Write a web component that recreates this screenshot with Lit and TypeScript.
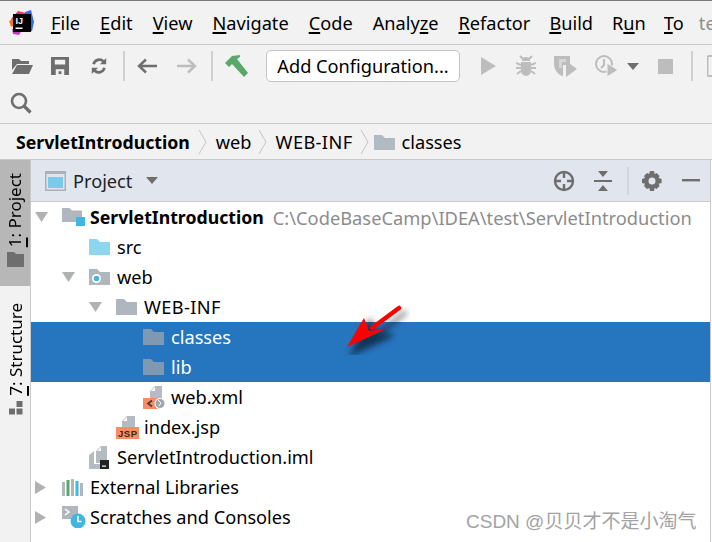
import { LitElement, html, css, svg } from "lit";
import { customElement } from "lit/decorators.js";

const G = "#afb1b3";
const D = "#6e6e6e";
const FOLDER = "M0 1h6l2 2.5h8V15H0z";

const ic = (w: number, h: number, body: unknown, vb = `0 0 ${w} ${h}`) =>
  html`<svg class="ic" width=${w} height=${h} viewBox=${vb}>${body}</svg>`;

const icons: Record<string, unknown> = {
  logo: ic(26, 26, svg`
    <path d="M2 9 9 1l8 2-3 16-9 1z" fill="#f0355e"/><path d="M0 11l6-3 2 6-6 3z" fill="#f97a12"/>
    <path d="M16 2l6-2 3 12-2 9-8-1z" fill="#2f6fe0"/><path d="M3 19l10 1-3 5-6-1z" fill="#c93cc0"/>
    <rect x="4" y="4" width="18" height="18" fill="#000"/>
    <text x="6.500" y="13.500" font-size="9" font-weight="700" fill="#fff" font-family="Liberation Sans">IJ</text>
    <rect x="6.500" y="17.500" width="7" height="1.500" fill="#fff"/>`),
  open: ic(22, 17, svg`<path d="M1 1h7l2 2h8v3H6L1 12z" fill="${D}"/><path d="M6 7h16l-4 9H1z" fill="${D}"/>`),
  save: ic(18, 18, svg`<path fill-rule="evenodd" d="M0 0h19v19H0zM4 3v5h11V3zM5 13v6h9v-6z" fill="${D}"/><rect x="8" y="15" width="3" height="3" fill="${D}"/>`, "0 0 19 19"),
  sync: ic(18, 18, svg`<path d="M4 8a6.500 6.500 0 0 1 11-3M16 12a6.500 6.500 0 0 1-11 3" fill="none" stroke="${D}" stroke-width="3"/><path d="M11 8l7-7v7zM9 12l-7 7v-7z" fill="${D}"/>`, "0 0 20 20"),
  back: ic(20, 16, svg`<path d="M20 8H3M9 1.500 2 8l7 6.500" fill="none" stroke="${D}" stroke-width="2.400"/>`),
  fwd: ic(20, 16, svg`<path d="M0 8h17M11 1.500 18 8l-7 6.500" fill="none" stroke="#bdbdbd" stroke-width="2.400"/>`),
  hammer: ic(24, 23, svg`<path d="M0 8 7 1l8-1v2l-3 2 11 14-4 4L7 9l-3 3z" fill="#59a869"/>`),
  search: ic(22, 22, svg`<circle cx="9" cy="9" r="7" fill="none" stroke="${D}" stroke-width="2.600"/><path d="M14 14l6.500 6.500" stroke="${D}" stroke-width="3.200"/>`),
  run: ic(16, 18, svg`<path d="M0 0l15 9-15 9z" fill="#bdbdbd"/>`),
  bug: ic(20, 22, svg`<path d="M6 6a4 4 0 0 1 8 0zM5 7h10v9a5 5 0 0 1-10 0z" fill="#bdbdbd"/><path d="M0 8l5 2M20 8l-5 2M0 13h5M20 13h-5M1 19l4-3M19 19l-4-3M4 1l3 3M16 1l-3 3" stroke="#bdbdbd" stroke-width="2"/>`),
  cover: ic(23, 24, svg`<path d="M0 2h16v9H9v11h-1C3 20 0 15 0 9z" fill="#bdbdbd"/><path d="M12 7l11 8-11 8z" fill="#bdbdbd"/><path d="M5 5h7v3H8v6H5z" fill="#f2f2f2" opacity=".5"/>`),
  prof: ic(23, 24, svg`<circle cx="9" cy="10" r="8" fill="none" stroke="#bdbdbd" stroke-width="2"/><path d="M9 5v6l-3 3" fill="none" stroke="#bdbdbd" stroke-width="2"/><path d="M12 9l11 7-11 7z" fill="#bdbdbd" stroke="#f2f2f2"/>`),
  caret: ic(12, 7, svg`<path d="M0 0h12L6 7z" fill="${D}"/>`),
  stop: ic(15, 15, svg`<rect width="15" height="15" fill="#bdbdbd"/>`),
  device: ic(10, 22, svg`<path d="M10 1H2a1.500 1.500 0 0 0-1.500 1.500v17A1.500 1.500 0 0 0 2 21h8" fill="none" stroke="#bdbdbd" stroke-width="2"/>`),
  crumbFolder: ic(21, 16, svg`<path d="M0 1h8l3 3h10v12H0z" fill="#afbac3"/>`),
  projectView: ic(21, 20, svg`<rect width="21" height="20" fill="#a9b0b8"/><rect x="1.500" y="3" width="18" height="15.500" fill="#e1e5ee"/><rect x="3" y="6" width="15" height="11" fill="#79cbe9"/>`),
  target: ic(22, 22, svg`<circle cx="11" cy="11" r="9" fill="none" stroke="${D}" stroke-width="2.400"/><path d="M11 1v7M11 14v7M1 11h7M14 11h7" stroke="${D}" stroke-width="2.400"/>`),
  collapse: ic(18, 22, svg`<path d="M4 1h10l-5 6zM4 21h10l-5-6z" fill="${D}"/><path d="M0 11h18" stroke="${D}" stroke-width="2"/>`),
  gear: ic(20, 20, svg`<path fill-rule="evenodd" d="M8 0h4l.6 3 2-.9 3 3-1 2 3 .9v4l-3 .7 1 2.300-3 3-2-1-.6 3H8l-.6-3-2.400 1-3-3 1-2.300-3-.7V8l3-.9-1-2 3-3 2 .9zM10 6.500a3.500 3.500 0 1 0 0 7 3.500 3.500 0 0 0 0-7z" fill="${D}"/>`),
  minus: ic(18, 3, svg`<rect width="18" height="2.400" fill="${D}"/>`),
  tabFolder: ic(17, 15, svg`<path d="M0 0h7l2 2h8v13H0z" fill="${D}"/>`),
  structure: ic(14, 14, svg`<rect x="7.500" y="0" width="6" height="6" fill="${D}"/><rect x="0" y="7.500" width="6" height="6" fill="${D}"/><rect x="7.500" y="7.500" width="6" height="6" fill="${D}"/>`),
  module: ic(23, 22, svg`<path d="${FOLDER}" transform="translate(0 1) scale(1.250 1)" fill="#afb6bd"/><rect x="14" y="11" width="9" height="9" fill="#40b6e0"/>`),
  src: ic(21, 16, svg`<path d="M0 0h8l3 3h10v13H0z" fill="#8ed5ee"/>`),
  web: ic(21, 16, svg`<path d="M0 0h8l3 3h10v13H0z" fill="#afb6bd"/><circle cx="7.500" cy="9.500" r="4.500" fill="#fff"/><circle cx="7.500" cy="9.500" r="2.800" fill="#40b6e0"/>`),
  folder: ic(21, 16, svg`<path d="M0 0h8l3 3h10v13H0z" fill="#afb6bd"/>`),
  folderSel: ic(21, 16, svg`<path d="M0 0h8l3 3h10v13H0z" fill="#8099b3"/>`),
  xml: ic(23, 23, svg`<path d="M7 5l5-5h7v14H7z" fill="#b4bbc2"/><path d="M8 5h4V1z" fill="#fff"/>
    <rect y="12" width="14" height="11" fill="#f98b65"/><path d="M9 14.500 5 17.500l4 3" fill="none" stroke="#3a3a3a" stroke-width="1.600"/>
    <circle cx="17" cy="17.500" r="5.500" fill="#fff"/><circle cx="17" cy="17.500" r="4.500" fill="#9aa7b0"/><path d="M15 14l3 3-2 3" stroke="#fff" fill="none"/>`),
  jsp: ic(23, 23, svg`<path d="M6 5l5-5h8v12H6z" fill="#b4bbc2"/><path d="M7 5h4V1z" fill="#fff"/><rect y="11" width="23" height="12" fill="#f98b65"/>
    <text x="2" y="21" font-size="9.500" font-weight="700" fill="#3a2a20" font-family="Liberation Sans" textLength="19">JSP</text>`),
  iml: ic(20, 23, svg`<path d="M7 5l5-5h6v17H7z" fill="#b4bbc2"/><path d="M8 5h4V1z" fill="#f7f7f7"/><path d="M0 9l5-4v18H0z" fill="#b4bbc2"/><rect x="5" y="6" width="1.500" height="17" fill="#fff"/>
    <path d="M5 18h6v5H5z" fill="#b4bbc2"/><rect x="11" y="14" width="9" height="9" fill="#232323"/><rect x="13" y="19.500" width="4" height="1.200" fill="#fff"/>`),
  libs: ic(22, 17, svg`<rect y="3" width="3" height="14" fill="#afb6bd"/><rect x="4.500" y="1" width="3" height="16" fill="#59a869"/><rect x="9" y="0" width="3" height="17" fill="#afb6bd"/><rect x="13.500" y="2" width="3" height="15" fill="#40b6e0"/><rect x="18" y="4" width="3" height="13" fill="#afb6bd"/>`),
  scratch: ic(24, 22, svg`<rect width="16" height="13" fill="#afb6bd"/><path d="M3 3l4 3-4 3" fill="none" stroke="#fff" stroke-width="1.500"/>
    <circle cx="16" cy="15" r="7.500" fill="#40b6e0"/><path d="M16 10v5.500h3.500" fill="none" stroke="#fff" stroke-width="1.500"/>`),
  down: ic(13, 10, svg`<path d="M0 0h13L6.500 10z" fill="${G}"/>`),
  right: ic(11, 13, svg`<path d="M0 0l11 6.500L0 13z" fill="${G}"/>`),
};

const sep = (cls: string) => html`<svg class=${cls} width="9" height="26" viewBox="0 0 9 26"><path d="M1 1l7 12-7 12" fill="none" stroke="#c4c4c4" stroke-width="1"/></svg>`;

const MENU: [string, string, string, string][] = [
  ["", "F", "ile", ""], ["", "E", "dit", ""], ["", "V", "iew", ""], ["", "N", "avigate", ""], ["", "C", "ode", ""],
  ["Analy", "z", "e", ""], ["", "R", "efactor", "tight"], ["", "B", "uild", "tight"], ["R", "u", "n", "tighter"], ["", "T", "o", "clip"],
];

interface Row { depth: number; arrow?: "down" | "right"; icon: string; text: string; bold?: boolean; hint?: string; sel?: boolean; caps?: boolean; }
const ROWS: Row[] = [
  { depth: 0, arrow: "down", icon: "module", text: "ServletIntroduction", bold: true, hint: "C:\\CodeBaseCamp\\IDEA\\test\\ServletIntroduction" },
  { depth: 1, icon: "src", text: "src" },
  { depth: 1, arrow: "down", icon: "web", text: "web" },
  { depth: 2, arrow: "down", icon: "folder", text: "WEB-INF", caps: true },
  { depth: 3, icon: "folderSel", text: "classes", sel: true },
  { depth: 3, icon: "folderSel", text: "lib", sel: true },
  { depth: 3, icon: "xml", text: "web.xml" },
  { depth: 2, icon: "jsp", text: "index.jsp" },
  { depth: 1, icon: "iml", text: "ServletIntroduction.iml" },
  { depth: 0, arrow: "right", icon: "libs", text: "External Libraries" },
  { depth: 0, arrow: "right", icon: "scratch", text: "Scratches and Consoles" },
];

@customElement("app-root")
export class AppRoot extends LitElement {
  static styles = css`
    :host { display: block; width: 712px; height: 542px; overflow: hidden; position: relative; background: #fff;
      font-family: "Noto Sans", "Open Sans", sans-serif; font-size: 18.2px; color: #000; }
    * { box-sizing: border-box; }
    .ic { display: block; flex: none; }
    .app { display: flex; flex-direction: column; height: 542px; border-top: 1px solid #7b7b7b; }
    .menu { flex: none; height: 44px; background: #f2f2f2; border-bottom: 1px solid #c9c9c9; display: flex; align-items: center; padding-left: 9px; white-space: nowrap; overflow: hidden; }
    .menu .logo { margin-right: 16px; }
    .menu span.m { margin-right: 20px; line-height: 24px; flex: none; }
    .menu span.tight { margin-right: 19px; }
    .menu span.tighter { margin-right: 18px; }
    .menu span.clip { width: 19px; margin-right: 16px; overflow: hidden; flex: none; }
    .menu span.more { color: #8c8c8c; flex: none; }
    u { text-underline-offset: 2px; text-decoration-thickness: 1.500px; }
    .tools { flex: none; height: 79px; background: #f2f2f2; border-bottom: 1px solid #c9c9c9; display: flex; flex-direction: column; padding-left: 11px; }
    .t1 { height: 42px; display: flex; align-items: center; white-space: nowrap; overflow: hidden; }
    .t1 span { flex: none; }
    .t2 { height: 31px; display: flex; align-items: center; margin-left: -1px; }
    .vs { width: 2px; height: 30px; background: #d0d0d0; flex: none; }
    .btn { height: 32px; width: 194px; flex: none; border: 1px solid #c4c4c4; border-radius: 5px; background: #fff; display: flex; align-items: center; justify-content: center; margin: 0 21px 0 17px; }
    .crumbs { flex: none; height: 36px; background: #f2f2f2; border-bottom: 1px solid #c9c9c9; display: flex; align-items: center; padding-left: 16px; white-space: nowrap; }
    .crumbs b { font-weight: 700; font-size: 17.700px; margin-right: 8px; }
    .crumbs .s1 { flex: none; margin-right: 9px; }
    .crumbs .s2 { flex: none; margin: 0 9px 0 6px; }
    .crumbs .s3 { flex: none; margin: 0 5px 0 7px; }
    .crumbs .ic { margin-right: 7px; }
    .caps { letter-spacing: .4px; }
    .main { flex: 1; display: flex; min-height: 0; border-right: 1px solid #c9c9c9; margin-right: 1px; }
    .strip { flex: none; width: 31px; background: #f2f2f2; border-right: 1px solid #c9c9c9; padding-left: 1px; }
    .tab { display: flex; flex-direction: column; align-items: center; font-size: 17px; }
    .tab.on { background: #b7b7b7; height: 126px; padding-top: 13px; margin-left: -1px; }
    .tab.off { padding-top: 17px; }
    .tab span { writing-mode: vertical-rl; transform: rotate(180deg); line-height: 22px; white-space: nowrap; }
    .tab .ic { margin-top: 5px; }
    .pane { flex: 1; min-width: 0; display: flex; flex-direction: column; }
    .head { flex: none; height: 42px; background: #e1e5ee; border-bottom: 1px solid #c9c9c9; display: flex; align-items: center; padding-left: 14px; color: #222; }
    .head .title { margin: 0 14px 0 7px; }
    .head .icons { margin-left: auto; display: flex; align-items: center; padding-right: 10px; }
    .head .vs { height: 28px; background: #d2d5dc; }
    .tree { flex: 1; overflow: hidden; }
    .row { height: 30px; display: flex; align-items: center; white-space: nowrap; position: relative; }
    .row.sel { background: #2675bf; color: #fff; }
    .row b { font-weight: 700; font-size: 17.700px; }
    .arrow { width: 31px; flex: none; display: flex; padding-left: 4px; }
    .icon { width: 28px; flex: none; display: flex; }
    .hint { color: #8c8c8c; margin-left: 9px; font-size: 18.300px; }
    .watermark { position: absolute; left: 466px; top: 510px; font-size: 19px; line-height: 24px; color: #a3a3a3; white-space: nowrap;
      font-family: "Liberation Sans", "Noto Sans CJK SC", sans-serif; }
    .pointer { position: absolute; left: 340px; top: 300px; }
  `;

  render() {
    return html`
      <div class="app">
        <div class="menu">
          <span class="logo">${icons.logo}</span>
          ${MENU.map(([a, u, b, c]) => html`<span class="m ${c}">${a}<u>${u}</u>${b}</span>`)}
          <span class="more">te</span>
        </div>
        <div class="tools">
          <div class="t1">
            ${icons.open}<span style="width:18px"></span>${icons.save}<span style="width:21px"></span>${icons.sync}
            <span style="width:15px"></span><i class="vs"></i><span style="width:12px"></span>${icons.back}
            <span style="width:20px"></span>${icons.fwd}<span style="width:14px"></span><i class="vs"></i>
            <span style="width:12px"></span>${icons.hammer}
            <div class="btn">Add Configuration...</div>
            ${icons.run}<span style="width:19px"></span>${icons.bug}<span style="width:18px"></span>${icons.cover}
            <span style="width:18px"></span>${icons.prof}<span style="width:9px"></span>${icons.caret}
            <span style="width:19px"></span>${icons.stop}<span style="width:18px"></span><i class="vs"></i>
            <span style="width:14px"></span>${icons.device}
          </div>
          <div class="t2">${icons.search}</div>
        </div>
        <div class="crumbs">
          <b>ServletIntroduction</b>${sep("s1")}<span>web</span>${sep("s2")}<span class="caps">WEB-INF</span>${sep("s3")}
          ${icons.crumbFolder}<span>classes</span>
        </div>
        <div class="main">
          <div class="strip">
            <div class="tab on"><span><u>1</u>: Project</span>${icons.tabFolder}</div>
            <div class="tab off"><span><u>7</u>: Structure</span>${icons.structure}</div>
          </div>
          <div class="pane">
            <div class="head">
              ${icons.projectView}<span class="title">Project</span>${icons.caret}
              <div class="icons">
                ${icons.target}<span style="width:19px"></span>${icons.collapse}<span style="width:15px"></span><i class="vs"></i>
                <span style="width:13px"></span>${icons.gear}<span style="width:20px"></span>${icons.minus}
              </div>
            </div>
            <div class="tree">
              ${ROWS.map((r) => html`
                <div class="row ${r.sel ? "sel" : ""}" style="padding-left:${r.depth * 27}px">
                  <span class="arrow">${r.arrow ? icons[r.arrow] : ""}</span>
                  <span class="icon">${icons[r.icon]}</span>
                  ${r.bold ? html`<b>${r.text}</b>` : html`<span class=${r.caps ? "caps" : ""}>${r.text}</span>`}
                  ${r.hint ? html`<span class="hint">${r.hint}</span>` : ""}
                </div>`)}
            </div>
          </div>
        </div>
      </div>
      <svg class="pointer" width="70" height="55" viewBox="0 0 70 55">
        <defs><filter id="s" x="-30%" y="-30%" width="170%" height="170%"><feGaussianBlur stdDeviation="3"/></filter></defs>
        <g transform="translate(6 7)" opacity=".55" filter="url(#s)"><path d="M59 6 30 28M7 46 24 15l5 14 17-1z" stroke="#000" stroke-width="4" stroke-linecap="round"/></g>
        <path d="M59 8 32 28" stroke="#f00" stroke-width="4.500" stroke-linecap="round"/>
        <path d="M7 47 24 18l5 13 17-2z" fill="#f00"/>
      </svg>
      <div class="watermark">CSDN @贝贝才不是小淘气</div>
    `;
  }
}
